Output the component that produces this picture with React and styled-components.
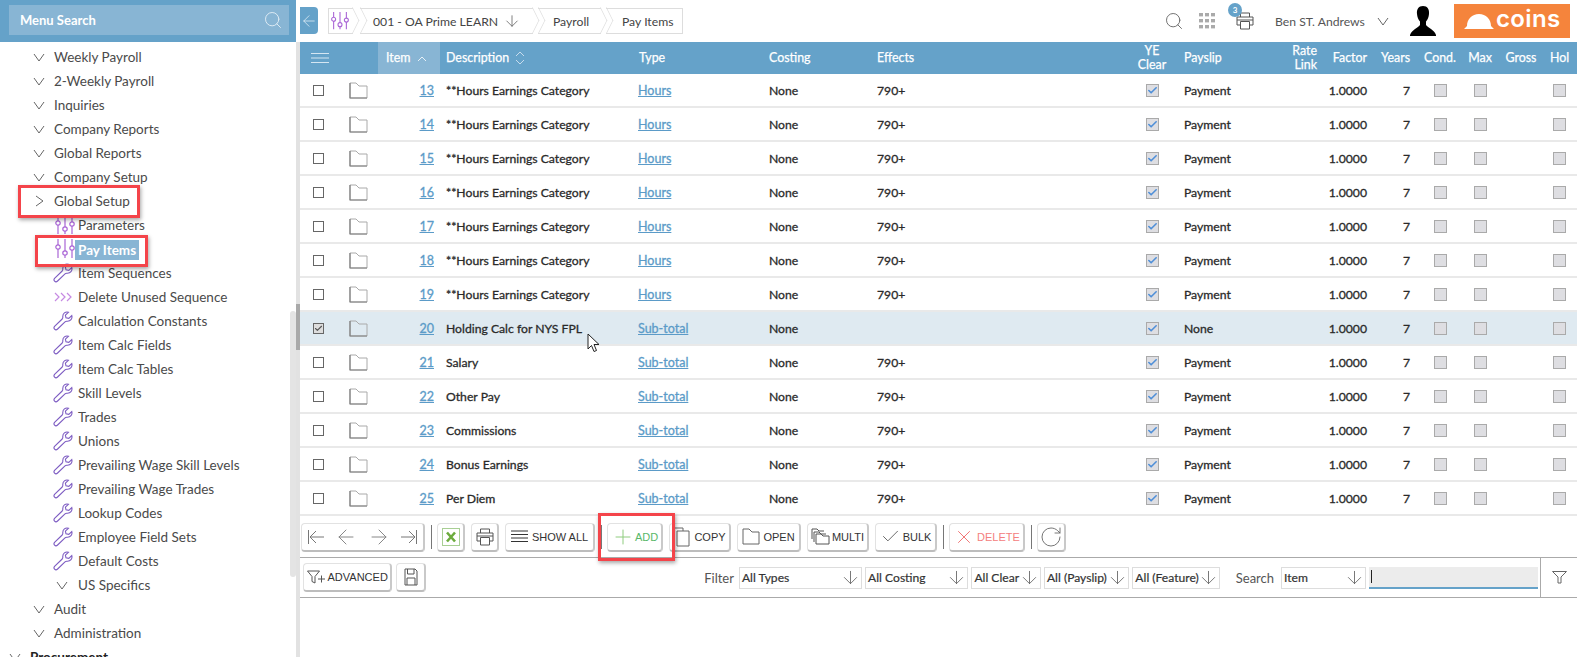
import React from 'react';
import styled, { createGlobalStyle } from 'styled-components';
import { ArrowDown, ArrowLeft, ArrowRight, Check, Plus, RotateCw, Search, X } from 'lucide-react';

const GlobalStyle = createGlobalStyle`
    html, body {
        margin: 0;
        height: 100%;
        overflow: hidden;
        background: #fff;
    }
    * {
        box-sizing: border-box;
    }
    body {
        font-family: Lato, "Open Sans", sans-serif;
        font-size: 12px;
        color: #333;
    }
`

const Page = styled.div`
    position: relative;
    display: flex;
    width: 1577px;
    height: 657px;
    overflow: hidden;
`

/* ---------- sidebar ---------- */

const Sidebar = styled.aside`
    position: relative;
    width: 296px;
    flex: none;
    display: flex;
    flex-direction: column;
    overflow: hidden;
`

const MenuHeader = styled.div`
    position: relative;
    z-index: 1;
    flex: none;
    height: 42px;
    padding: 5px 9px 7px 9px;
    background: #65a2c9;
`

const MenuSearch = styled.div`
    height: 30px;
    width: 280px;
    padding: 0 6px 0 11px;
    background: #88b5d4;
    display: flex;
    align-items: center;
    justify-content: space-between;
    color: #fff;
    font-weight: 700;
    font-size: 13px;
`

const NavList = styled.div`
    margin-top: -21px;
    display: flex;
    flex-direction: column;
`

const NavRow = styled.div`
    height: 24px;
    flex: none;
    display: flex;
    align-items: center;
    padding-left: ${props => props.$indent}px;
    color: ${props => props.$strong ? '#222' : '#4a4a4a'};
    font-size: 13.5px;
    font-weight: ${props => props.$strong ? 700 : 400};
    white-space: nowrap;
`

const NavIcon = styled.span`
    width: ${props => props.$width}px;
    flex: none;
    display: flex;
    align-items: center;
`

const NavLabel = styled.span`
    padding: 2px 3px;
    margin-left: -3px;
    ${props => props.$active && `
        margin-top: 2px;
        background: #88b5d4;
        color: #fff;
        font-weight: 700;
    `}
`

const NavThumb = styled.div`
    position: absolute;
    left: 290px;
    top: 311px;
    width: 6px;
    height: 266px;
    background: #e4e4e4;
    border-radius: 3px;
`

const Splitter = styled.div`
    position: relative;
    width: 4px;
    flex: none;
    margin-top: 42px;
    background: #e2e2e2;

    &::after {
        content: '';
        position: absolute;
        left: 0;
        top: 262px;
        width: 4px;
        height: 46px;
        background: #a9a9a9;
    }
`

/* ---------- main ---------- */

const Main = styled.main`
    flex: 1;
    min-width: 0;
    display: flex;
    flex-direction: column;
`

const TopBar = styled.header`
    height: 42px;
    flex: none;
    display: flex;
    align-items: center;
    position: relative;
`

const BackButton = styled.button`
    width: 18px;
    height: 27px;
    margin: -1px 0 0 0;
    padding: 0;
    border: 0;
    border-radius: 0 4px 4px 0;
    background: #65a2c9;
    color: #e4f0f7;
    display: flex;
    align-items: center;
    justify-content: center;
`

const Breadcrumbs = styled.nav`
    margin-left: 10px;
    display: flex;
    height: 26px;
`

const Crumb = styled.div`
    position: relative;
    width: ${props => props.$width}px;
    margin-left: ${props => props.$gap || 0}px;
    padding-left: ${props => props.$pad}px;
    display: flex;
    align-items: center;
    border: 1.5px solid #ddd;
    border-left-width: ${props => props.$first ? 1.5 : 0}px;
    border-right-width: ${props => props.$last ? 1.5 : 0}px;
    font-size: 12.2px;
    color: #444;
    white-space: nowrap;

    ${props => !props.$first && `
        &::before {
            content: '';
            position: absolute;
            left: -9px;
            top: 2px;
            width: 18px;
            height: 18px;
            border-top: 1.5px solid #ddd;
            border-right: 1.5px solid #ddd;
            transform: scaleX(0.5) rotate(45deg);
        }
    `}

    ${props => !props.$last && `
        &::after {
            content: '';
            position: absolute;
            right: -9px;
            top: 2px;
            width: 18px;
            height: 18px;
            border-top: 1.5px solid #ddd;
            border-right: 1.5px solid #ddd;
            transform: scaleX(0.5) rotate(45deg);
        }
    `}
`

const CrumbArrow = styled.span`
    margin-left: 5px;
    display: flex;
    color: #555;
`

const TopActions = styled.div`
    position: absolute;
    left: 864px;
    top: 0;
    right: 0;
    height: 42px;
    display: flex;
    align-items: center;
`

const TopIcon = styled.span`
    position: relative;
    margin-left: ${props => props.$left || 0}px;
    display: flex;
`

const Badge = styled.span`
    position: absolute;
    left: -8px;
    top: -9px;
    width: 14px;
    height: 14px;
    border-radius: 50%;
    background: #65a2c9;
    color: #fff;
    font-size: 8px;
    font-weight: 700;
    display: flex;
    align-items: center;
    justify-content: center;
`

const UserName = styled.span`
    margin-left: 21px;
    font-size: 12.2px;
    color: #555;
    white-space: nowrap;
`

const Logo = styled.div`
    width: 116px;
    height: 34px;
    margin-left: 18px;
    background: #f5843c;
    display: flex;
    align-items: center;
    padding-left: 10px;
    gap: 2px;
`

const LogoText = styled.span`
    color: #fff;
    font-family: Inter, sans-serif;
    font-size: 24px;
    font-weight: 600;
    line-height: 1;
    letter-spacing: 0.4px;
    margin-top: -4px;
`

/* ---------- table ---------- */

const columns = '40px 38px 62px 193px 130px 108px 259px 44px 96px 53px 50px 47px 40px 40px 42px 35px';

const TableHead = styled.div`
    display: grid;
    grid-template-columns: ${columns};
    height: 32px;
    flex: none;
    background: #65a2c9;
    color: #fff;
    font-size: 12.4px;
    -webkit-text-stroke: 0.25px #fff;
`

const HeadCell = styled.div`
    display: flex;
    align-items: center;
    line-height: 14px;
    white-space: nowrap;
    justify-content: ${props => props.$align === 'right' ? 'flex-end' : props.$align === 'center' ? 'center' : 'flex-start'};
    text-align: ${props => props.$align || 'left'};
    padding-left: ${props => props.$left || 0}px;
    padding-right: ${props => props.$right || 0}px;
    background: ${props => props.$sorted ? '#88b5d4' : 'transparent'};
`

const TableRow = styled.div`
    display: grid;
    grid-template-columns: ${columns};
    height: 34px;
    flex: none;
    align-items: center;
    border-bottom: 2px solid #e9e9e9;
    background: ${props => props.$selected ? '#dfeaf1' : '#fff'};
    font-size: 12.2px;
    color: #2a2a2a;
    -webkit-text-stroke: 0.3px currentColor;
`

const Cell = styled.div`
    white-space: nowrap;
    text-align: ${props => props.$align || 'left'};
    padding-left: ${props => props.$left || 0}px;
    padding-right: ${props => props.$right || 0}px;
`

const BoxCell = styled.div`
    display: flex;
    justify-content: center;
`

const FolderCell = styled.div`
    display: flex;
    padding-left: 9px;
`

const TableLink = styled.a`
    color: #5b9bc8;
    font-size: 12.5px;
    text-decoration: underline;
`

const RowCheck = styled.span`
    width: 11px;
    height: 11px;
    margin-left: 13px;
    border: 1.5px solid #666;
    background: ${props => props.$checked ? '#ddd' : '#fff'};
    display: flex;
    align-items: center;
    justify-content: center;
    color: #555;
`

const GreyBox = styled.span`
    width: 13px;
    height: 13px;
    background: #dedee2;
    border: 1px solid #aaa;
    display: flex;
    align-items: center;
    justify-content: center;
    color: #4f8fd8;
`

/* ---------- toolbars ---------- */

const ActionBar = styled.div`
    height: 42px;
    flex: none;
    display: flex;
    align-items: center;
    gap: 6px;
    padding: 1px 0 0 1px;
    border-bottom: 1px solid #aaa;
`

const Button = styled.button`
    height: 29px;
    width: ${props => props.$width}px;
    padding: 0;
    margin: 0;
    border: 1px solid #e2e2e2;
    border-right: 2px solid #c9c9c9;
    border-bottom: 2px solid #bdbdbd;
    border-radius: 4px;
    background: #fff;
    display: flex;
    align-items: center;
    justify-content: ${props => props.$spread ? 'space-around' : 'center'};
    gap: ${props => props.$gap ?? 5}px;
    font-family: "Liberation Sans", Arial, sans-serif;
    font-size: 11px;
    color: ${props => props.$tone || '#333'};
    white-space: nowrap;
`

const Divider = styled.span`
    width: 1px;
    height: 24px;
    margin-right: -1px;
    background: #777;
    flex: none;
`

const FilterBar = styled.div`
    height: 40px;
    flex: none;
    display: flex;
    align-items: center;
    border-bottom: 1px solid #aaa;
    padding-left: 3px;
`

const SaveButton = styled(Button)`
    margin-left: 4px;
    margin-right: 278px;
`

const FieldLabel = styled.span`
    font-size: 13px;
    color: #555;
    margin-right: ${props => props.$right}px;
    margin-left: ${props => props.$left || 0}px;
`

const Select = styled.div`
    width: ${props => props.$width}px;
    height: 22px;
    margin-right: 3px;
    padding: 0 2px;
    border: 1px solid #ddd;
    display: flex;
    align-items: center;
    justify-content: space-between;
    font-size: 12.1px;
    color: #333;
    -webkit-text-stroke: 0.2px currentColor;
    white-space: nowrap;

    svg {
        flex: none;
        margin: 0 -2px 0 -4px;
    }
`

const SearchInput = styled.div`
    width: 170px;
    height: 22px;
    padding-left: 2px;
    background: #ececec;
    border-bottom: 2px solid #65a2c9;
    display: flex;
    align-items: center;

    &::before {
        content: '';
        width: 1px;
        height: 13px;
        background: #222;
    }
`

const FunnelCell = styled.div`
    width: 37px;
    height: 100%;
    margin-left: 2px;
    border-left: 1px solid #aaa;
    display: flex;
    align-items: center;
    justify-content: center;
`

/* ---------- overlays ---------- */

const Callout = styled.div`
    position: absolute;
    left: ${props => props.$x}px;
    top: ${props => props.$y}px;
    width: ${props => props.$w}px;
    height: ${props => props.$h}px;
    border: 3px solid #f4444a;
    box-shadow: 1px 2px 4px rgba(0, 0, 0, 0.35);
    pointer-events: none;
    z-index: 3;
`

const Cursor = styled.svg`
    position: absolute;
    left: 587px;
    top: 333px;
    z-index: 3;
`

/* ---------- drawings ---------- */

const Chevron = ({ right }) => (
    <svg width="12" height="12" viewBox="0 0 12 12" fill="none" stroke="#666" strokeWidth="1">
        {right ? <path d="M3 1 L10 6 L3 11" /> : <path d="M1 3 L6 10 L11 3" />}
    </svg>
);

const Sliders = ({ size = 22 }) => (
    <svg width={size} height={size} viewBox="0 0 22 22" fill="none" stroke="#aa66d6" strokeWidth="1.2">
        <path d="M4 1 V7 M4 11 V20 M11 1 V13 M11 17 V20 M18 1 V8 M18 12 V20" />
        <circle cx="4" cy="9" r="2.2" />
        <circle cx="11" cy="15" r="2.2" />
        <circle cx="18" cy="10" r="2.2" />
    </svg>
);

const Tripple = () => (
    <svg width="18" height="12" viewBox="0 0 18 12" fill="none" stroke="#c68ae2" strokeWidth="1.2">
        <path d="M1 2 L5 6 L1 10 M7 2 L11 6 L7 10 M13 2 L17 6 L13 10" />
    </svg>
);

const WrenchIcon = () => (
    <svg width="20" height="20" viewBox="0 0 20 20" fill="none" stroke="#7d5cc2" strokeWidth="1.1">
        <path d="M15.5 1.2 C12.5 0.2 9.5 2.5 9.8 6 C9.9 7 9.9 7.2 9.2 8 L1.8 15.2 C0.8 16.2 0.8 17.4 1.6 18.2 C2.4 19 3.6 19 4.6 18 L12 10.8 C12.8 10.1 13 10.1 14 10.2 C17.5 10.5 19.6 7.5 18.8 4.6 L15.8 7.4 L13 6.8 L12.4 4.2 Z" />
    </svg>
);

const Folder = () => (
    <svg width="19" height="17" viewBox="0 0 19 17" fill="none">
        <path d="M1 16 V1 H7 L10 4 H18 V16 Z" stroke="#aaa" strokeWidth="1" />
        <path d="M1 1 V16 H18" stroke="#808080" strokeWidth="1.2" />
    </svg>
);

const MenuLines = () => (
    <svg width="18" height="12" viewBox="0 0 18 12" stroke="#d5e6f2" strokeWidth="1">
        <path d="M0 1.5 H18 M0 6 H18 M0 10.5 H18" />
    </svg>
);

const SortUp = () => (
    <svg width="10" height="7" viewBox="0 0 10 7" fill="none" stroke="#e6f0f7" strokeWidth="1">
        <path d="M1 6 L5 2 L9 6" />
    </svg>
);

const SortBoth = () => (
    <svg width="10" height="14" viewBox="0 0 10 14" fill="none" stroke="#c7dced" strokeWidth="1">
        <path d="M1 5 L5 1 L9 5 M1 9 L5 13 L9 9" />
    </svg>
);

const AppsGrid = () => (
    <svg width="16" height="16" viewBox="0 0 16 16" fill="#aaa">
        {[0, 6, 12].map(y => [0, 6, 12].map(x => <rect key={`${x}-${y}`} x={x} y={y} width="4" height="3.4" />))}
    </svg>
);

const PrintIcon = ({ size = 18 }) => (
    <svg width={size} height={size} viewBox="0 0 18 18" fill="none" stroke="#555" strokeWidth="1">
        <path d="M4.5 5 V1 H13.5 V5" />
        <path d="M4.5 13 H1 V5 H17 V13 H13.5" />
        <path d="M4.5 9.5 V17 H13.5 V9.5 Z" />
        <path d="M1 8 H17" />
    </svg>
);

const Person = () => (
    <svg width="26" height="30" viewBox="0 0 26 30" fill="#000">
        <path d="M13 0 C8.5 0 6.5 3.5 7 8 C7.3 11 8.3 13.5 10 15.5 L10 19 C8 22 2 23.5 0 29 L0 30 H26 L26 29 C24 23.5 18 22 16 19 L16 15.5 C17.7 13.5 18.7 11 19 8 C19.5 3.5 17.5 0 13 0 Z" />
    </svg>
);

const Helmet = () => (
    <svg width="30" height="15" viewBox="0 0 30 15" fill="#fff">
        <path d="M3 12 C3 5 8 0 15 0 C22 0 27 5 27 12 L30 15 H0 Z" />
    </svg>
);

const Pager = ({ kind }) => (
    <svg width="18" height="16" viewBox="0 0 18 16" fill="none" stroke="#777" strokeWidth="1">
        {kind === 'first' && <path d="M1.5 1 V15 M17 8 H3 L9 2 M3 8 L9 14" />}
        {kind === 'last' && <path d="M16.5 1 V15 M1 8 H15 L9 2 M15 8 L9 14" />}
    </svg>
);

const ExcelIcon = () => (
    <svg width="18" height="18" viewBox="0 0 18 18" fill="none">
        <rect x="0.5" y="0.5" width="17" height="17" stroke="#a8cf94" />
        <path d="M5 4.5 L13 13.5 M13 4.5 L5 13.5" stroke="#6cab3d" strokeWidth="2.6" />
    </svg>
);

const ListIcon = () => (
    <svg width="17" height="13" viewBox="0 0 17 13" stroke="#333" strokeWidth="1">
        <path d="M0 1 H17 M0 4.5 H17 M0 8 H17 M0 11.5 H17" />
    </svg>
);

const CopyIcon = () => (
    <svg width="17" height="20" viewBox="0 0 17 20" fill="#fff" stroke="#666" strokeWidth="1">
        <path d="M1 15 V1 H10 V4" />
        <path d="M4 19 V4 H16 V19 Z" />
    </svg>
);

const OpenIcon = () => (
    <svg width="18" height="17" viewBox="0 0 18 17" fill="none" stroke="#666" strokeWidth="1">
        <path d="M1 16 V1 H7 L10 4 H17 V16 Z" />
    </svg>
);

const MultiIcon = () => (
    <svg width="19" height="17" viewBox="0 0 19 17" fill="#fff" stroke="#555" strokeWidth="1">
        <path d="M1 11 V1 H6 L8 3 H13" />
        <path d="M3 14 V4 H8 L10 6 H15" />
        <path d="M5 16 V6 H10 L12 8 H18 V16 Z" />
    </svg>
);

const SaveIcon = () => (
    <svg width="14" height="18" viewBox="0 0 14 18" fill="none" stroke="#555" strokeWidth="1">
        <path d="M1 1 H11 L13 3 V17 H1 Z" />
        <path d="M3.5 1 V6 H10 V1 M3 17 V10 H11 V17" />
    </svg>
);

const FunnelPlus = () => (
    <svg width="19" height="14" viewBox="0 0 19 14" fill="none" stroke="#555" strokeWidth="1">
        <path d="M0.5 1 H12.5 L8 6.5 V13 L5 11.5 V6.5 Z" />
        <path d="M11 9 H18 M14.5 5.5 V12.5" />
    </svg>
);

const Funnel = () => (
    <svg width="15" height="13" viewBox="0 0 15 13" fill="none" stroke="#666" strokeWidth="1">
        <path d="M0.5 0.5 H14.5 L9 6 V12 L6 12 V6 Z" />
    </svg>
);

const Down = () => <ArrowDown size={21} strokeWidth={1} color="#666" />;

/* ---------- data ---------- */

const menu = [
    { label: 'Payroll', kind: 'top' },
    { label: 'Weekly Payroll', kind: 'group' },
    { label: '2-Weekly Payroll', kind: 'group' },
    { label: 'Inquiries', kind: 'group' },
    { label: 'Company Reports', kind: 'group' },
    { label: 'Global Reports', kind: 'group' },
    { label: 'Company Setup', kind: 'group' },
    { label: 'Global Setup', kind: 'open' },
    { label: 'Parameters', kind: 'sliders' },
    { label: 'Pay Items', kind: 'sliders', active: true },
    { label: 'Item Sequences', kind: 'wrench' },
    { label: 'Delete Unused Sequence', kind: 'run' },
    { label: 'Calculation Constants', kind: 'wrench' },
    { label: 'Item Calc Fields', kind: 'wrench' },
    { label: 'Item Calc Tables', kind: 'wrench' },
    { label: 'Skill Levels', kind: 'wrench' },
    { label: 'Trades', kind: 'wrench' },
    { label: 'Unions', kind: 'wrench' },
    { label: 'Prevailing Wage Skill Levels', kind: 'wrench' },
    { label: 'Prevailing Wage Trades', kind: 'wrench' },
    { label: 'Lookup Codes', kind: 'wrench' },
    { label: 'Employee Field Sets', kind: 'wrench' },
    { label: 'Default Costs', kind: 'wrench' },
    { label: 'US Specifics', kind: 'sub' },
    { label: 'Audit', kind: 'group' },
    { label: 'Administration', kind: 'group' },
    { label: 'Procurement', kind: 'top' },
];

const hours = '**Hours Earnings Category';
const rows = [
    { id: 13, name: hours, type: 'Hours' },
    { id: 14, name: hours, type: 'Hours' },
    { id: 15, name: hours, type: 'Hours' },
    { id: 16, name: hours, type: 'Hours' },
    { id: 17, name: hours, type: 'Hours' },
    { id: 18, name: hours, type: 'Hours' },
    { id: 19, name: hours, type: 'Hours' },
    { id: 20, name: 'Holding Calc for NYS FPL', type: 'Sub-total', selected: true },
    { id: 21, name: 'Salary', type: 'Sub-total' },
    { id: 22, name: 'Other Pay', type: 'Sub-total' },
    { id: 23, name: 'Commissions', type: 'Sub-total' },
    { id: 24, name: 'Bonus Earnings', type: 'Sub-total' },
    { id: 25, name: 'Per Diem', type: 'Sub-total' },
];

const navLayout = (kind) => {
    switch (kind) {
        case 'group': return { indent: 33, width: 21, icon: <Chevron /> };
        case 'open': return { indent: 33, width: 21, icon: <Chevron right /> };
        case 'sub': return { indent: 56, width: 22, icon: <Chevron /> };
        case 'sliders': return { indent: 54, width: 24, icon: <Sliders /> };
        case 'wrench': return { indent: 53, width: 25, icon: <WrenchIcon /> };
        case 'run': return { indent: 54, width: 24, icon: <Tripple /> };
        default: return { indent: 9, width: 21, icon: <Chevron /> };
    }
};

const App = () => {
    return (
        <Page>
            <GlobalStyle />
            <Sidebar>
                <MenuHeader>
                    <MenuSearch>
                        Menu Search
                        <Search size={20} strokeWidth={1.1} color="#e4eff6" />
                    </MenuSearch>
                </MenuHeader>
                <NavList>
                    {menu.map(item => {
                        const { indent, width, icon } = navLayout(item.kind);
                        return (
                            <NavRow key={item.label} $indent={indent} $strong={item.kind === 'top'}>
                                <NavIcon $width={width}>{icon}</NavIcon>
                                <NavLabel $active={item.active}>{item.label}</NavLabel>
                            </NavRow>
                        );
                    })}
                </NavList>
                <NavThumb />
            </Sidebar>
            <Splitter />
            <Main>
                <TopBar>
                    <BackButton><ArrowLeft size={18} strokeWidth={1} /></BackButton>
                    <Breadcrumbs>
                        <Crumb $first $width={25} $pad={1}><Sliders size={20} /></Crumb>
                        <Crumb $gap={7} $width={173} $pad={13}>
                            001 - OA Prime LEARN
                            <CrumbArrow><ArrowDown size={18} strokeWidth={1} /></CrumbArrow>
                        </Crumb>
                        <Crumb $gap={5} $width={63} $pad={15}>Payroll</Crumb>
                        <Crumb $gap={5} $last $width={77} $pad={16}>Pay Items</Crumb>
                    </Breadcrumbs>
                    <TopActions>
                        <Search size={20} strokeWidth={1.1} color="#666" />
                        <TopIcon $left={15}><AppsGrid /></TopIcon>
                        <TopIcon $left={21}>
                            <Badge>3</Badge>
                            <PrintIcon />
                        </TopIcon>
                        <UserName>Ben ST. Andrews</UserName>
                        <TopIcon $left={12}><Chevron /></TopIcon>
                        <TopIcon $left={21}><Person /></TopIcon>
                        <Logo>
                            <Helmet />
                            <LogoText>coins</LogoText>
                        </Logo>
                    </TopActions>
                </TopBar>

                <TableHead>
                    <HeadCell $left={11}><MenuLines /></HeadCell>
                    <HeadCell />
                    <HeadCell $sorted $left={8}>Item&nbsp;&nbsp;<SortUp /></HeadCell>
                    <HeadCell $left={6}>Description&nbsp;&nbsp;<SortBoth /></HeadCell>
                    <HeadCell $left={6}>Type</HeadCell>
                    <HeadCell $left={6}>Costing</HeadCell>
                    <HeadCell $left={6}>Effects</HeadCell>
                    <HeadCell $align="center">YE<br />Clear</HeadCell>
                    <HeadCell $left={10}>Payslip</HeadCell>
                    <HeadCell $align="right" $right={6}>Rate<br />Link</HeadCell>
                    <HeadCell $align="right" $right={6}>Factor</HeadCell>
                    <HeadCell $align="right" $right={10}>Years</HeadCell>
                    <HeadCell $align="center">Cond.</HeadCell>
                    <HeadCell $align="center">Max</HeadCell>
                    <HeadCell $align="center">Gross</HeadCell>
                    <HeadCell $align="center">Hol</HeadCell>
                </TableHead>

                {rows.map(row => (
                    <TableRow key={row.id} $selected={row.selected}>
                        <Cell>
                            <RowCheck $checked={row.selected}>
                                {row.selected && <Check size={9} strokeWidth={3} />}
                            </RowCheck>
                        </Cell>
                        <FolderCell><Folder /></FolderCell>
                        <Cell $align="right" $right={6}><TableLink>{row.id}</TableLink></Cell>
                        <Cell $left={6}>{row.name}</Cell>
                        <Cell $left={5}><TableLink>{row.type}</TableLink></Cell>
                        <Cell $left={6}>None</Cell>
                        <Cell $left={6}>{row.selected ? '' : '790+'}</Cell>
                        <BoxCell><GreyBox><Check size={11} strokeWidth={3.5} /></GreyBox></BoxCell>
                        <Cell $left={10}>{row.selected ? 'None' : 'Payment'}</Cell>
                        <Cell />
                        <Cell $align="right" $right={6}>1.0000</Cell>
                        <Cell $align="right" $right={10}>7</Cell>
                        <BoxCell><GreyBox /></BoxCell>
                        <BoxCell><GreyBox /></BoxCell>
                        <Cell />
                        <BoxCell><GreyBox /></BoxCell>
                    </TableRow>
                ))}

                <ActionBar>
                    <Button $width={124} $spread $gap={0}>
                        <Pager kind="first" />
                        <ArrowLeft size={24} strokeWidth={1} color="#888" />
                        <ArrowRight size={24} strokeWidth={1} color="#888" />
                        <Pager kind="last" />
                    </Button>
                    <Divider />
                    <Button $width={28}><ExcelIcon /></Button>
                    <Button $width={28}><PrintIcon /></Button>
                    <Button $width={90} $gap={4}><ListIcon />SHOW ALL</Button>
                    <Divider />
                    <Button $width={56} $tone="#58b86a" $gap={0}><Plus size={24} strokeWidth={1} color="#8fcc7e" />ADD</Button>
                    <Button $width={62} $gap={4}><CopyIcon />COPY</Button>
                    <Button $width={64} $gap={3}><OpenIcon />OPEN</Button>
                    <Button $width={62} $gap={2}><MultiIcon />MULTI</Button>
                    <Button $width={62} $gap={2}><Check size={21} strokeWidth={1} color="#555" />BULK</Button>
                    <Divider />
                    <Button $width={76} $tone="#f48080" $gap={2}><X size={22} strokeWidth={1} color="#f06a6a" />DELETE</Button>
                    <Divider />
                    <Button $width={29} $gap={0}><RotateCw size={24} strokeWidth={0.9} color="#666" /></Button>
                </ActionBar>

                <FilterBar>
                    <Button $width={90} $gap={2}><FunnelPlus />ADVANCED</Button>
                    <SaveButton $width={30}><SaveIcon /></SaveButton>
                    <FieldLabel $right={5}>Filter</FieldLabel>
                    <Select $width={124}>All Types<Down /></Select>
                    <Select $width={104}>All Costing<Down /></Select>
                    <Select $width={70}>All Clear<Down /></Select>
                    <Select $width={86}>All (Payslip)<Down /></Select>
                    <Select $width={88}>All (Feature)<Down /></Select>
                    <FieldLabel $left={13} $right={7}>Search</FieldLabel>
                    <Select $width={86}>Item<Down /></Select>
                    <SearchInput />
                    <FunnelCell><Funnel /></FunnelCell>
                </FilterBar>
            </Main>

            <Callout $x={18} $y={185} $w={122} $h={33} />
            <Callout $x={35} $y={235} $w={113} $h={32} />
            <Callout $x={598} $y={513} $w={77} $h={48} />
            <Cursor width="13" height="20" viewBox="0 0 13 20">
                <path d="M1 1 V16 L4.5 12.5 L7 18.5 L9.5 17.5 L7 11.5 H12 Z" fill="#fff" stroke="#222" strokeWidth="1" />
            </Cursor>
        </Page>
    );
};

export default App;
